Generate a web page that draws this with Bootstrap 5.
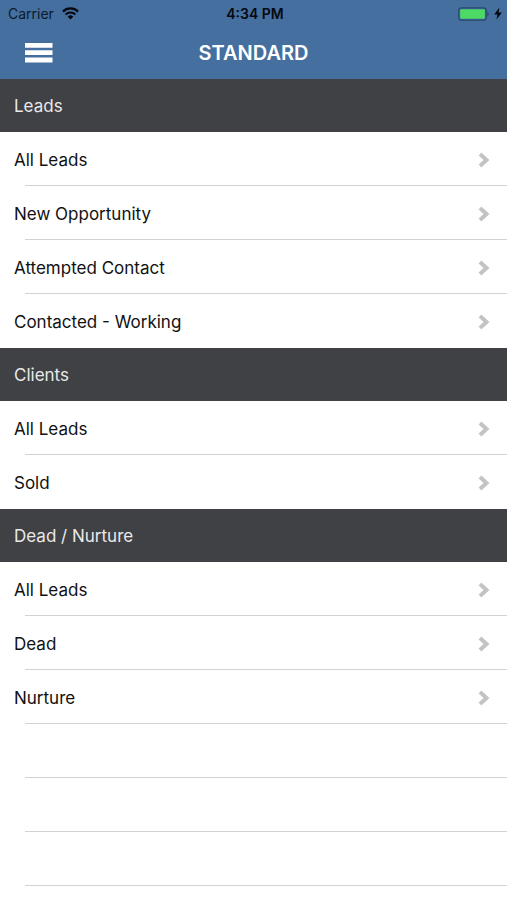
<!DOCTYPE html>
<html lang="en">
<head>
<meta charset="utf-8">
<meta name="viewport" content="width=device-width, initial-scale=1">
<title>Standard</title>
<link href="https://cdn.jsdelivr.net/npm/bootstrap@5.3.0/dist/css/bootstrap.min.css" rel="stylesheet">
<style>
  body { font-family: Inter, "Liberation Sans", sans-serif; font-size: 17px; line-height: 24px; color: #111; background: #fff; }
  .app-header { background: #456f9f; }
  .status-bar { height: 27px; padding: 0 5px 0 8px; font-size: 14px; line-height: 27px; color: #0b1a2b; }
  .clock { font-weight: 600; color: #05090f; }
  .title-bar { height: 52px; padding: 0 24px; }
  .menu-btn { line-height: 0; }
  .menu-cell { padding-bottom: 4px; }
  .screen-title { font-size: 20px; line-height: 24px; font-weight: 600; }
  .section-title { height: 53px; padding: 0 14px; font-size: 17px; line-height: 24px; font-weight: 400; color: #e9e9ea; background: #404144; }
  .stage-row { height: 54px; padding: 1px 17px 0 14px; color: #111; background: linear-gradient(#d2d2d4, #d2d2d4) 25px 100% / 100% 1px no-repeat; }
  .stage-row:hover, .stage-row:focus { color: #000; }
  .stage-list:not(.open-end) > :last-child .stage-row { background: none; }
</style>
<script defer src="https://cdn.jsdelivr.net/npm/bootstrap@5.3.0/dist/js/bootstrap.bundle.min.js"></script>
</head>
<body>
<svg class="d-none" aria-hidden="true">
  <symbol id="chevron" viewBox="0 0 12 16"><path d="M2 2l6.500 6L2 14" fill="none" stroke="#c3c3c5" stroke-width="4"/></symbol>
</svg>

<header class="app-header">
  <div class="status-bar row g-0 align-items-center">
    <div class="col d-flex align-items-center gap-2">
      <span>Carrier</span>
      <svg width="17" height="13" viewBox="0 0 17 13" role="img" aria-label="Wi-Fi" fill="none" stroke="#05090f" stroke-width="2.2">
        <path d="M.9 4.600a10.800 10.800 0 0 1 15.200 0M3.600 7.500a7 7 0 0 1 9.800 0"/>
        <path d="M8.500 12.500L5.700 9.700a4 4 0 0 1 5.600 0z" fill="#05090f" stroke="none"/>
      </svg>
    </div>
    <div class="col-auto clock">4:34 PM</div>
    <div class="col d-flex align-items-center justify-content-end gap-1">
      <svg width="32" height="14" viewBox="0 0 32 14" role="img" aria-label="Battery full">
        <rect x=".8" y=".8" width="27.400" height="12.400" rx="2.500" fill="#456f9f" stroke="#28496d" stroke-width="1.200"/>
        <rect x="2.200" y="2.200" width="24.600" height="9.600" rx="1" fill="#4cd964"/>
        <path d="M29.500 4.500q2.200 2.500 0 5z" fill="#1f3d5c"/>
      </svg>
      <svg width="8" height="13" viewBox="0 0 8 13" role="img" aria-label="Charging"><path d="M5.400.6L.2 7.400h3.200L2.500 12.400 7.900 5.400H4.600z" fill="#05090f"/></svg>
    </div>
  </div>
  <div class="title-bar row g-0 align-items-center">
    <div class="menu-cell col">
      <button type="button" class="menu-btn btn p-0 border-0 rounded-0" aria-label="Menu">
        <svg width="29" height="21" viewBox="0 0 29 21" fill="#fff"><path d="M1 1h27.500v4.800H1zM1 8.300h27.500v4.800H1zM1 15.600h27.500v4.800H1z"/></svg>
      </button>
    </div>
    <h1 class="screen-title col-auto m-0 text-white">STANDARD</h1>
    <div class="col"></div>
  </div>
</header>

<main>
  <section>
    <h2 class="section-title d-flex align-items-center m-0">Leads</h2>
    <ul class="stage-list list-unstyled m-0">
      <li><a href="#" class="stage-row d-flex align-items-center justify-content-between text-decoration-none">All Leads<svg width="12" height="16" aria-hidden="true"><use href="#chevron"/></svg></a></li>
      <li><a href="#" class="stage-row d-flex align-items-center justify-content-between text-decoration-none">New Opportunity<svg width="12" height="16" aria-hidden="true"><use href="#chevron"/></svg></a></li>
      <li><a href="#" class="stage-row d-flex align-items-center justify-content-between text-decoration-none">Attempted Contact<svg width="12" height="16" aria-hidden="true"><use href="#chevron"/></svg></a></li>
      <li><a href="#" class="stage-row d-flex align-items-center justify-content-between text-decoration-none">Contacted - Working<svg width="12" height="16" aria-hidden="true"><use href="#chevron"/></svg></a></li>
    </ul>
  </section>
  <section>
    <h2 class="section-title d-flex align-items-center m-0">Clients</h2>
    <ul class="stage-list list-unstyled m-0">
      <li><a href="#" class="stage-row d-flex align-items-center justify-content-between text-decoration-none">All Leads<svg width="12" height="16" aria-hidden="true"><use href="#chevron"/></svg></a></li>
      <li><a href="#" class="stage-row d-flex align-items-center justify-content-between text-decoration-none">Sold<svg width="12" height="16" aria-hidden="true"><use href="#chevron"/></svg></a></li>
    </ul>
  </section>
  <section>
    <h2 class="section-title d-flex align-items-center m-0">Dead / Nurture</h2>
    <ul class="stage-list open-end list-unstyled m-0">
      <li><a href="#" class="stage-row d-flex align-items-center justify-content-between text-decoration-none">All Leads<svg width="12" height="16" aria-hidden="true"><use href="#chevron"/></svg></a></li>
      <li><a href="#" class="stage-row d-flex align-items-center justify-content-between text-decoration-none">Dead<svg width="12" height="16" aria-hidden="true"><use href="#chevron"/></svg></a></li>
      <li><a href="#" class="stage-row d-flex align-items-center justify-content-between text-decoration-none">Nurture<svg width="12" height="16" aria-hidden="true"><use href="#chevron"/></svg></a></li>
    </ul>
    <div aria-hidden="true">
      <div class="stage-row"></div>
      <div class="stage-row"></div>
      <div class="stage-row"></div>
    </div>
  </section>
</main>
</body>
</html>
